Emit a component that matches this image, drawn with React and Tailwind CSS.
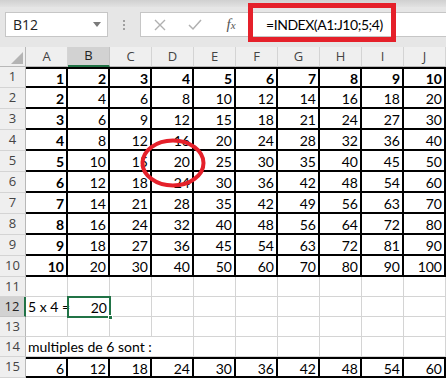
import React from 'react'

const COLS = ['A', 'B', 'C', 'D', 'E', 'F', 'G', 'H', 'I', 'J']

// one grid row: row header + 10 cells
const RowHeader = ({ n, active }) => (
  <div
    className={
      'w-[26px] shrink-0 h-full flex items-center justify-center text-[13px] font-[Open_Sans,sans-serif] border-r border-b ' +
      (active
        ? 'bg-[#d2d2d2] text-[#222] border-r-2 border-r-[#217346] border-b-[#c4c4c4]'
        : 'bg-[#efefef] text-[#444] border-r-[#b8b8b8] border-b-[#d4d4d4]')
    }
  >
    {n}
  </div>
)

const TableRow = ({ n, values, boldFirst, allBold, top }) => (
  <div className="flex h-[21px]">
    <RowHeader n={n} />
    {values.map((v, i) => (
      <div
        key={i}
        className={
          'w-[42px] shrink-0 h-full border-r-2 border-b-2 border-black flex items-center justify-end pr-[2px] pt-[2px] text-[14px] text-black ' +
          (top ? 'border-t-2 ' : '') +
          (allBold || (boldFirst && i === 0) ? 'font-bold' : '')
        }
      >
        {v}
      </div>
    ))}
  </div>
)

const PlainRow = ({ n, children, active }) => (
  <div className="flex h-[20px]">
    <RowHeader n={n} active={active} />
    {children}
  </div>
)

const Blank = ({ w = 'w-[42px]' }) => (
  <div className={w + ' shrink-0 h-full border-r border-b border-[#d4d4d4]'} />
)

export default function App() {
  const rows = []
  for (let r = 1; r <= 10; r++) {
    rows.push(COLS.map((_, c) => r * (c + 1)))
  }

  return (
    <div className="relative w-[446px] h-[378px] overflow-hidden bg-white font-[Lato,sans-serif]">
      {/* formula bar */}
      <div className="h-[7px] bg-gradient-to-b from-[#d0d0d0] to-[#e2e2e2]" />
      <div className="h-[40px] bg-[#e6e6e6] pt-[5px]">
        <div className="flex items-center h-[25px]">
          <div className="ml-[5px] w-[103px] h-full bg-white border border-[#c6c6c6] flex items-center justify-between pl-[7px] pr-[6px]">
            <span className="text-[14px] text-[#222] font-[Open_Sans,sans-serif]">B12</span>
            <svg width="8" height="5" viewBox="0 0 8 5">
              <path d="M0 0 H8 L4 5 Z" fill="#7a7a7a" />
            </svg>
          </div>
          <div className="w-[32px] flex flex-col items-center gap-[2px]">
            <span className="w-[2px] h-[2px] bg-[#a0a0a0]" />
            <span className="w-[2px] h-[2px] bg-[#a0a0a0]" />
            <span className="w-[2px] h-[2px] bg-[#a0a0a0]" />
          </div>
          <div className="flex-1 h-full bg-white border border-[#c6c6c6] border-r-0 flex items-center">
            <div className="w-[36px] flex justify-center pl-[2px]">
              <svg width="12" height="12" viewBox="0 0 12 12">
                <path d="M1 1 L11 11 M11 1 L1 11" stroke="#b0b0b0" strokeWidth="1.4" />
              </svg>
            </div>
            <div className="w-[36px] flex justify-center">
              <svg width="14" height="12" viewBox="0 0 14 12">
                <path d="M1 6 L5 10 L13 1" stroke="#b0b0b0" strokeWidth="1.5" fill="none" />
              </svg>
            </div>
            <div className="w-[36px] flex justify-center">
              <span className="font-[Liberation_Serif,serif] italic text-[15px] text-[#555]">
                f<span className="text-[11px]">x</span>
              </span>
            </div>
            <span className="ml-[17px] text-[14px] tracking-[-0.45px] text-black">=INDEX(A1:J10;5;4)</span>
          </div>
        </div>
      </div>

      {/* column headers */}
      <div className="flex h-[20px] font-[Open_Sans,sans-serif] text-[13px]">
        <div className="relative w-[26px] shrink-0 h-full bg-[#efefef] border-r border-b border-[#b8b8b8]">
          <svg className="absolute right-[2px] bottom-[2px]" width="12" height="12" viewBox="0 0 12 12">
            <path d="M12 0 V12 H0 Z" fill="#b4b4b4" />
          </svg>
        </div>
        {COLS.map((c) => (
          <div
            key={c}
            className={
              'w-[42px] shrink-0 h-full flex items-center justify-center border-r ' +
              (c === 'B'
                ? 'bg-[#d2d2d2] text-[#222] border-[#c4c4c4] border-b-2 border-b-[#217346]'
                : 'bg-[#efefef] text-[#444] border-[#d4d4d4] border-b border-b-[#b8b8b8]')
            }
          >
            {c}
          </div>
        ))}
      </div>

      {/* multiplication table */}
      {rows.map((vals, i) => (
        <TableRow key={i} n={i + 1} values={vals} boldFirst allBold={i === 0} top={i === 0} />
      ))}

      <PlainRow n={11}>
        {COLS.map((c) => <Blank key={c} />)}
      </PlainRow>

      <PlainRow n={12} active>
        <div className="w-[42px] shrink-0 h-full border-r border-b border-[#d4d4d4] flex items-center pl-[2px] text-[14px] text-black whitespace-nowrap">
          5 x 4 =
        </div>
        <div className="relative w-[42px] shrink-0 h-full flex items-center justify-end pr-[3px] text-[14px] text-black">
          20
          <div className="absolute -left-[1px] -top-[1px] w-[44px] h-[22px] border-2 border-[#217346]" />
          <div className="absolute -right-[3px] -bottom-[3px] w-[5px] h-[5px] bg-[#217346] border border-white" />
        </div>
        {COLS.slice(2).map((c) => <Blank key={c} />)}
      </PlainRow>

      <PlainRow n={13}>
        {COLS.map((c) => <Blank key={c} />)}
      </PlainRow>

      <PlainRow n={14}>
        <div className="w-[168px] shrink-0 h-full border-r border-b border-[#d4d4d4] flex items-center pl-[2px] text-[14px] text-black whitespace-nowrap">
          multiples de 6 sont :
        </div>
        {COLS.slice(4).map((c) => <Blank key={c} />)}
      </PlainRow>

      <TableRow n={15} values={COLS.map((_, c) => 6 * (c + 1))} top />

      {/* red annotations */}
      <div className="absolute left-[248px] top-[3px] w-[148px] h-[39px] border-[5px] border-[#e5202a]" />
      <svg className="absolute left-[140px] top-[138px]" width="66" height="50" viewBox="0 0 66 50">
        <ellipse cx="33" cy="25" rx="30.5" ry="22.5" fill="none" stroke="#e5202a" strokeWidth="4" />
      </svg>
    </div>
  )
}
